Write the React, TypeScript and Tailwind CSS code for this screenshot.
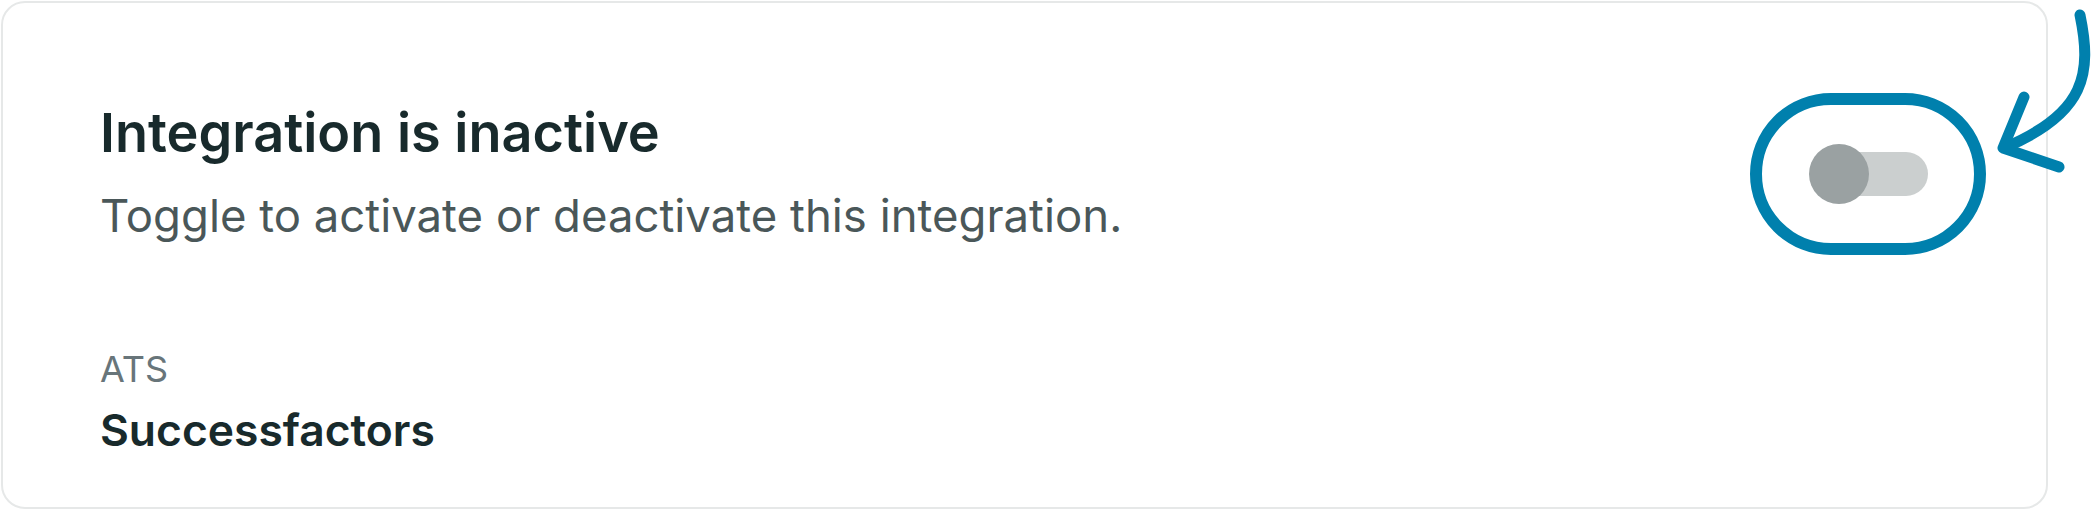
import React from 'react';

const Toggle: React.FC = () => (
  <div className="relative flex items-center">
    <div className="ml-[5px] h-[44px] w-[114px] rounded-full bg-[#cbcfcf]" />
    <div className="absolute left-0 h-[60px] w-[60px] rounded-full bg-[#9aa1a2]" />
  </div>
);

const App: React.FC = () => {
  return (
    <div
      className="relative h-[510px] w-[2091px] bg-white"
      style={{ fontFamily: 'Inter, "Noto Sans", sans-serif' }}
    >
      <div className="ml-px mt-px flex h-[508px] w-[2047px] items-start justify-between rounded-[24px] border-2 border-[#e6e8e8] bg-white pl-[97px] pr-[60px]">
        <div className="flex flex-col">
          <h1 className="mt-[98px] text-[54px] font-semibold leading-[64px] text-[#182a2c]">
            Integration is inactive
          </h1>
          <p className="mt-[23px] text-[45.5px] leading-[56px] text-[#4a5759]">
            Toggle to activate or deactivate this integration.
          </p>
          <span className="mt-[103px] text-[36px] leading-[44px] text-[#68757a]">ATS</span>
          <span className="mt-[12px] text-[44.4px] font-semibold leading-[54px] text-[#182a2c]">
            Successfactors
          </span>
        </div>

        <div className="mt-[90px] flex h-[162px] w-[236px] items-center justify-center rounded-full border-[12px] border-[#0080ad]">
          <Toggle />
        </div>
      </div>

      {/* hand-drawn arrow pointing at the toggle */}
      <svg
        className="absolute left-0 top-0"
        width="2091"
        height="510"
        viewBox="0 0 2091 510"
        fill="none"
      >
        <path
          d="M2080 14 C2092 72 2086 112 2006 146"
          stroke="#0080ad"
          strokeWidth="11"
          strokeLinecap="round"
        />
        <path
          d="M2024 96 L2003 147 L2059 166"
          stroke="#0080ad"
          strokeWidth="11"
          strokeLinecap="round"
          strokeLinejoin="round"
        />
      </svg>
    </div>
  );
};

export default App;
